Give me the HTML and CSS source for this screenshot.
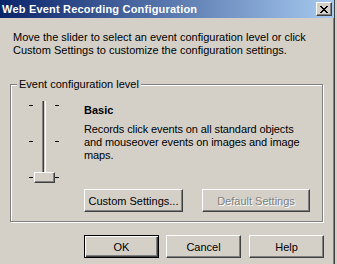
FILE: index.html
```html
<!DOCTYPE html>
<html lang="en">
<head>
    <meta charset="UTF-8">
    <title>Web Event Recording Configuration</title>
    <link rel="stylesheet" href="styles.css">
</head>
<body>

    <div class="window">
        <div class="titlebar">
            <span class="title">Web Event Recording Configuration</span>
            <button class="close-btn" type="button">
                <svg width="8" height="7" viewBox="0 0 8 7" shape-rendering="crispEdges">
                    <path d="M0 0h2v1h-2z M6 0h2v1h-2z M1 1h2v1h-2z M5 1h2v1h-2z M2 2h4v1h-4z M3 3h2v1h-2z M2 4h4v1h-4z M1 5h2v1h-2z M5 5h2v1h-2z M0 6h2v1h-2z M6 6h2v1h-2z" fill="#000"/>
                </svg>
            </button>
        </div>

        <div class="dialog-body">
            <p class="intro">Move the slider to select an event configuration level or click<br>Custom Settings to customize the configuration settings.</p>

            <div class="group">
                <span class="group-label">Event configuration level</span>

                <!-- level slider -->
                <div class="slider">
                    <div class="ticks"><i></i><i></i><i></i></div>
                    <div class="track"></div>
                    <div class="ticks"><i></i><i></i><i></i></div>
                    <div class="thumb"></div>
                </div>

                <div class="level">
                    <div class="level-name">Basic</div>
                    <p class="level-desc">Records click events on all standard objects<br>and mouseover events on images and image<br>maps.</p>
                    <div class="level-actions">
                        <button class="btn btn-custom" type="button">Custom Settings...</button>
                        <button class="btn btn-reset" type="button" disabled>Default Settings</button>
                    </div>
                </div>
            </div>

            <div class="dialog-actions">
                <button class="btn btn-default" type="button">OK</button>
                <button class="btn" type="button">Cancel</button>
                <button class="btn btn-help" type="button">Help</button>
            </div>
        </div>
    </div>

</body>
</html>
```

FILE: styles.css
```css
body {
    margin: 0;
    padding: 0;
    background-color: #D4D0C8; /* classic button face */
    font-family: 'Liberation Sans', Arial, sans-serif;
    font-size: 11px;
    color: #000000;
}

.window {
    width: 335px;
    height: 264px;
    box-sizing: border-box;
    border-right: 1px solid #404040;
    box-shadow: inset -1px 0 0 #808080;
}

.titlebar {
    display: flex;
    align-items: center;
    height: 18px;
    padding: 0 2px 0 2px;
    background: linear-gradient(to right, #0A246A, #A6CAF0);
}

.title {
    color: #FFFFFF;
    font-weight: bold;
    letter-spacing: 0.2px;
    line-height: 18px;
}

.close-btn {
    margin-left: auto;
    width: 16px;
    height: 14px;
    padding: 0;
    display: flex;
    align-items: center;
    justify-content: center;
    background-color: #D4D0C8;
    border: 1px solid;
    border-color: #FFFFFF #404040 #404040 #FFFFFF;
    box-shadow: inset -1px -1px 0 #808080;
}

.dialog-body {
    padding: 13px 0 0 10px;
}

.intro {
    margin: 0 0 0 3px;
    line-height: 13px;
}

/* etched group box */
.group {
    position: relative;
    display: flex;
    width: 313px;
    height: 138px;
    margin-top: 27px;
    padding: 16px 0 0 18px;
    box-sizing: border-box;
    border: 1px solid #808080;
    box-shadow: 1px 1px 0 #FFFFFF, inset 1px 1px 0 #FFFFFF;
}

.group-label {
    position: absolute;
    top: -7px;
    left: 6px;
    padding: 0 2px;
    line-height: 13px;
    background-color: #D4D0C8;
}

.slider {
    position: relative;
    display: flex;
    height: 82px;
}

.ticks {
    display: flex;
    flex-direction: column;
    justify-content: space-between;
    width: 4px;
    padding: 4px 0 5px;
}

.ticks i {
    display: block;
    height: 1px;
    background-color: #000000;
}

.track {
    width: 4px;
    height: 78px;
    margin: 0 9px;
    box-sizing: border-box;
    border-left: 1px solid #808080;
    border-right: 1px solid #FFFFFF;
    background: linear-gradient(to right, #404040 50%, #D4D0C8 50%);
}

.thumb {
    position: absolute;
    left: 5px;
    top: 71px;
    width: 21px;
    height: 11px;
    box-sizing: border-box;
    background-color: #D4D0C8;
    border: 1px solid;
    border-color: #FFFFFF #404040 #404040 #FFFFFF;
    box-shadow: inset -1px -1px 0 #808080;
}

.level {
    display: flex;
    flex-direction: column;
    margin-left: 25px;
}

.level-name {
    margin-top: 3px;
    font-weight: bold;
    line-height: 13px;
}

.level-desc {
    margin: 6px 0 0;
    line-height: 13px;
    letter-spacing: -0.1px;
}

.level-actions {
    display: flex;
    gap: 19px;
    margin-top: 27px;
}

.btn {
    width: 75px;
    height: 23px;
    padding: 0;
    font: inherit;
    color: #000000;
    background-color: #D4D0C8;
    border: 1px solid;
    border-color: #FFFFFF #404040 #404040 #FFFFFF;
    box-shadow: inset -1px -1px 0 #808080;
}

.btn-custom {
    width: 99px;
}

.btn-reset {
    width: 108px;
}

.btn:disabled {
    color: #808080;
    text-shadow: 1px 1px 0 #FFFFFF;
}

.btn-default {
    border-color: #000000;
    box-shadow: inset 1px 1px 0 #FFFFFF, inset -1px -1px 0 #404040, inset -2px -2px 0 #808080;
}

.dialog-actions {
    display: flex;
    gap: 7px;
    margin-top: 13px;
    padding-left: 74px;
}

.btn-help {
    margin-left: 1px;
}
```
